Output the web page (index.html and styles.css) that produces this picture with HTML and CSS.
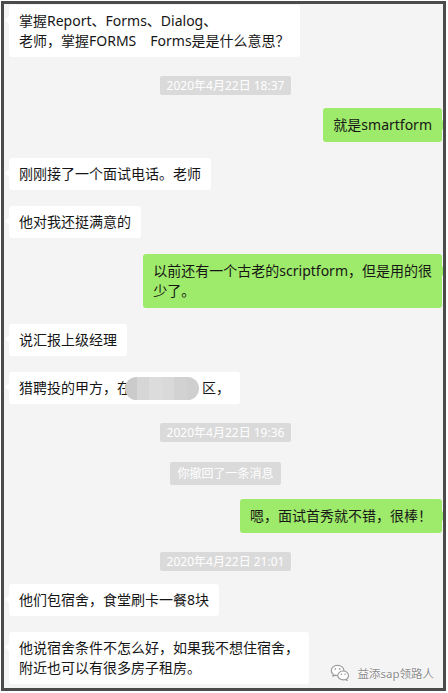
FILE: index.html
```html
<!DOCTYPE html>
<html lang="zh-CN">
<head>
  <meta charset="UTF-8" />
  <meta name="viewport" content="width=device-width, initial-scale=1.0" />
  <title>聊天记录</title>
  <link rel="stylesheet" href="styles.css">
</head>
<body>
  <div class="frame">
    <div class="chat">
      <div class="row left">
        <div class="bubble">掌握Report、Forms、Dialog、<br>老师，掌握FORMS　Forms是是什么意思？</div>
      </div>

      <div class="stamp">2020年4月22日 18:37</div>

      <div class="row right">
        <div class="bubble">就是smartform</div>
      </div>

      <div class="row left">
        <div class="bubble">刚刚接了一个面试电话。老师</div>
      </div>

      <div class="row left">
        <div class="bubble">他对我还挺满意的</div>
      </div>

      <div class="row right">
        <div class="bubble">以前还有一个古老的scriptform，但是用的很<br>少了。</div>
      </div>

      <div class="row left">
        <div class="bubble">说汇报上级经理</div>
      </div>

      <div class="row left">
        <div class="bubble">猎聘投的甲方，在<span class="masked"></span>区，</div>
      </div>

      <div class="stamp">2020年4月22日 19:36</div>

      <div class="stamp recall">你撤回了一条消息</div>

      <div class="row right">
        <div class="bubble">嗯，面试首秀就不错，很棒！</div>
      </div>

      <div class="stamp">2020年4月22日 21:01</div>

      <div class="row left">
        <div class="bubble">他们包宿舍，食堂刷卡一餐8块</div>
      </div>

      <div class="row left">
        <div class="bubble">他说宿舍条件不怎么好，如果我不想住宿舍，<br>附近也可以有很多房子租房。</div>
      </div>
    </div>

    <!-- 公众号水印 -->
    <div class="watermark">
      <svg width="20" height="17" viewBox="0 0 19 16">
        <path d="M7.2 1.2C3.8 1.2 1.2 3.4 1.2 6.1c0 1.5.8 2.8 2 3.7l-.5 1.7 2-1c.8.3 1.6.4 2.5.4 3.4 0 6-2.2 6-4.8S10.6 1.2 7.2 1.2z" fill="#fff" stroke="#9a9a9a" stroke-width="1.1" stroke-linejoin="round"/>
        <path d="M12.6 6.6c-2.9 0-5.2 1.9-5.2 4.2s2.3 4.2 5.2 4.2c.7 0 1.4-.1 2-.3l1.7.9-.4-1.5c1-.8 1.7-2 1.7-3.3 0-2.3-2.3-4.2-5-4.2z" fill="#fff" stroke="#9a9a9a" stroke-width="1.1" stroke-linejoin="round"/>
        <circle cx="5" cy="4.6" r=".8" fill="#9a9a9a"/>
        <circle cx="9.2" cy="4.6" r=".8" fill="#9a9a9a"/>
        <circle cx="10.9" cy="9.6" r=".7" fill="#9a9a9a"/>
        <circle cx="14.3" cy="9.6" r=".7" fill="#9a9a9a"/>
      </svg>
      <span>益添sap领路人</span>
    </div>
  </div>
</body>
</html>
```

FILE: styles.css
```css
* {
  margin: 0;
  padding: 0;
  box-sizing: border-box;
}

body {
  background: #fff;
  font-family: 'Noto Sans', 'Noto Sans CJK SC', sans-serif;
  color: #161616;
}

.frame {
  position: relative;
  width: 445px;
  height: 690px;
  margin: 1px 0 0 1px;
  border: 3px solid #4b4b4b;
  background: #f4f4f4;
  overflow: hidden;
}

.chat {
  display: flex;
  flex-direction: column;
  gap: 16px;
  padding: 1px 1px 0 5px;
}

.row {
  display: flex;
}

.row.right {
  justify-content: flex-end;
}

.bubble {
  position: relative;
  font-size: 14px;
  line-height: 20px;
  padding: 6px 10px;
  border-radius: 3px;
  background: #fff;
}

.row.right .bubble {
  background: #9eea6a;
  padding: 7px 10px;
}

/* 小尾巴 */
.row.left .bubble::before {
  content: '';
  position: absolute;
  left: -4px;
  top: 11px;
  border-top: 4px solid transparent;
  border-bottom: 4px solid transparent;
  border-right: 4px solid #fff;
}

.row.right .bubble::before {
  content: '';
  position: absolute;
  right: -5px;
  top: 12px;
  border-top: 5px solid transparent;
  border-bottom: 5px solid transparent;
  border-left: 5px solid #9eea6a;
}

/* 打码 */
.masked {
  display: inline-block;
  position: relative;
  width: 71px;
  height: 14px;
  vertical-align: middle;
}

.masked::after {
  content: '';
  position: absolute;
  left: -6px;
  top: -5px;
  width: 74px;
  height: 23px;
  border-radius: 12px;
  background: linear-gradient(90deg,
    #cbcbcb 0 16%, #d6d6d6 16% 32%, #dcdcdc 32% 50%,
    #d9d9d9 50% 66%, #d2d2d2 66% 84%, #cfcfcf 84% 100%);
}

.stamp {
  align-self: center;
  margin: 3px 0 -3px;
  padding: 0 7px;
  border-radius: 2px;
  background: #dadada;
  color: #fff;
  font-size: 12px;
  line-height: 19px;
}

.stamp.recall {
  line-height: 23px;
  margin: 7px 0 -2px;
}

.watermark {
  position: absolute;
  right: 9px;
  bottom: 7px;
  display: flex;
  align-items: center;
  gap: 7px;
  color: #8c8c8c;
  font-size: 11.5px;
  text-shadow: 0 0 2px #fff, 0 0 2px #fff;
}
```
